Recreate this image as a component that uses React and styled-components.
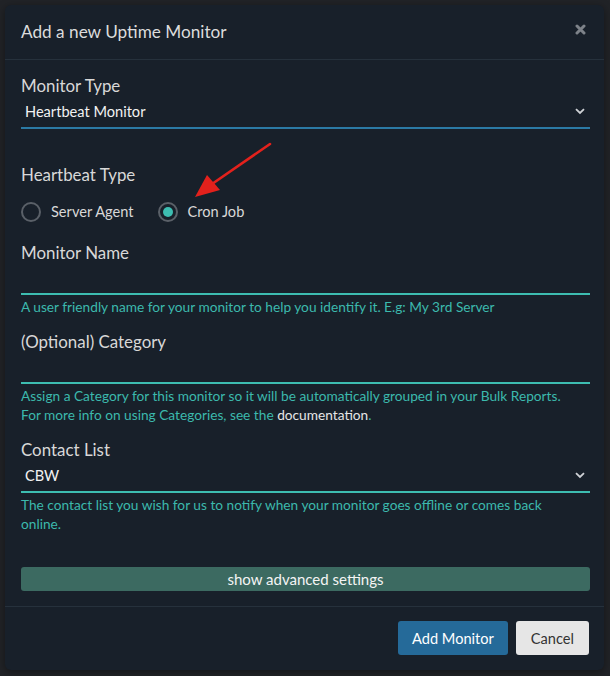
import React from "react";
import styled, { createGlobalStyle } from "styled-components";

const Global = createGlobalStyle`
  html, body { margin: 0; padding: 0; background: #212327; }
  body { font-family: Lato, "Open Sans", sans-serif; }
  * { box-sizing: border-box; }
`;

const Backdrop = styled.div`
  width: 610px;
  height: 676px;
  padding: 5px 6px 6px 5px;
  background: #212327;
`;

const Modal = styled.div`
  position: relative;
  width: 599px;
  height: 665px;
  background: #18202a;
  border-radius: 6px;
  display: flex;
  flex-direction: column;
  box-shadow: 0 2px 8px rgba(0, 0, 0, 0.4);
`;

const Header = styled.div`
  height: 55px;
  padding: 0 16px;
  display: flex;
  align-items: center;
  justify-content: space-between;
  border-bottom: 1px solid #26313c;
`;

const Title = styled.h4`
  margin: 0;
  font-size: 17.2px;
  font-weight: 400;
  color: #dcdcdc;
`;

const Close = styled.svg`
  margin-right: 2px;
  margin-top: -5px;
`;

const Body = styled.div`
  flex: 1;
  padding: 15px 14px 15px 16px;
  display: flex;
  flex-direction: column;
  border-bottom: 1px solid #26313c;
`;

const Group = styled.div`
  display: flex;
  flex-direction: column;
  margin-bottom: ${(p) => p.$mb || 0}px;
`;

const Label = styled.label`
  font-size: 16.9px;
  line-height: 22px;
  color: #d8d8d8;
`;

const SelectBox = styled.div`
  height: 32px;
  display: flex;
  align-items: center;
  justify-content: space-between;
  padding: 0 5px 0 4px;
  border-bottom: 2px solid ${(p) => p.$line};
  color: #f2f2f2;
  font-size: 14.6px;
`;

const InputBox = styled.div`
  height: 31px;
  border-bottom: 2px solid #3dbdb1;
`;

const Help = styled.p`
  margin: 2px 0 0;
  font-size: 13.7px;
  line-height: 19px;
  color: #3cb9ad;
`;

const DocLink = styled.span`
  color: #e6e6e6;
`;

const RadioRow = styled.div`
  display: flex;
  align-items: center;
  height: 24px;
  margin-top: 14px;
`;

const RadioItem = styled.div`
  display: flex;
  align-items: center;
  margin-right: ${(p) => p.$mr || 0}px;
`;

const RadioCircle = styled.span`
  width: 20px;
  height: 20px;
  border-radius: 50%;
  border: 2px solid #5a6068;
  display: flex;
  align-items: center;
  justify-content: center;
  margin-right: 10px;
  &::after {
    content: "";
    display: ${(p) => (p.$checked ? "block" : "none")};
    width: 10px;
    height: 10px;
    border-radius: 50%;
    background: #3dbdb1;
  }
`;

const RadioText = styled.span`
  font-size: 14.6px;
  color: #d8d8d8;
`;

const AdvancedButton = styled.div`
  height: 24px;
  margin-top: 34px;
  border-radius: 3px;
  background: #3c6a61;
  color: #f4f4f4;
  font-size: 15px;
  display: flex;
  align-items: center;
  justify-content: center;
`;

const Footer = styled.div`
  height: 64px;
  padding: 0 15px 0 16px;
  display: flex;
  align-items: center;
  justify-content: flex-end;
  gap: 8px;
`;

const Button = styled.div`
  height: 34px;
  padding: 0 ${(p) => p.$px}px;
  border-radius: 3px;
  display: flex;
  align-items: center;
  font-size: 14.6px;
  background: ${(p) => (p.$primary ? "#256a99" : "#e6e6e6")};
  color: ${(p) => (p.$primary ? "#ffffff" : "#333333")};
`;

const Arrow = styled.svg`
  position: absolute;
  left: 185px;
  top: 135px;
  pointer-events: none;
`;

const Chevron = () => (
  <svg width="10" height="7" viewBox="0 0 10 7">
    <path d="M1 1.2 L5 5 L9 1.2" fill="none" stroke="#cfd2d6" strokeWidth="1.8" />
  </svg>
);

export default function App() {
  return (
    <>
      <Global />
      <Backdrop>
        <Modal>
          <Header>
            <Title>Add a new Uptime Monitor</Title>
            <Close width="11" height="11" viewBox="0 0 11 11">
              <path d="M2 2 L9 9 M9 2 L2 9" stroke="#7d8289" strokeWidth="3" strokeLinecap="round" />
            </Close>
          </Header>
          <Body>
            <Group $mb={35}>
              <Label>Monitor Type</Label>
              <SelectBox $line="#2b7aa5">
                <span>Heartbeat Monitor</span>
                <Chevron />
              </SelectBox>
            </Group>
            <Group $mb={18}>
              <Label>Heartbeat Type</Label>
              <RadioRow>
                <RadioItem $mr={24}>
                  <RadioCircle />
                  <RadioText>Server Agent</RadioText>
                </RadioItem>
                <RadioItem>
                  <RadioCircle $checked />
                  <RadioText>Cron Job</RadioText>
                </RadioItem>
              </RadioRow>
            </Group>
            <Group $mb={15}>
              <Label>Monitor Name</Label>
              <InputBox />
              <Help>A user friendly name for your monitor to help you identify it. E.g: My 3rd Server</Help>
            </Group>
            <Group $mb={15}>
              <Label>(Optional) Category</Label>
              <InputBox />
              <Help>
                Assign a Category for this monitor so it will be automatically grouped in your Bulk Reports.
                <br />
                For more info on using Categories, see the <DocLink>documentation</DocLink>.
              </Help>
            </Group>
            <Group>
              <Label>Contact List</Label>
              <SelectBox $line="#3dbdb1">
                <span>CBW</span>
                <Chevron />
              </SelectBox>
              <Help>
                The contact list you wish for us to notify when your monitor goes offline or comes back
                <br />
                online.
              </Help>
            </Group>
            <AdvancedButton>show advanced settings</AdvancedButton>
          </Body>
          <Footer>
            <Button $primary $px={14}>Add Monitor</Button>
            <Button $px={15}>Cancel</Button>
          </Footer>
          <Arrow width="90" height="70" viewBox="0 0 90 70">
            <path d="M80 4 L22 44" stroke="#e3211c" strokeWidth="2.6" strokeLinecap="round" />
            <path d="M5 57 L17 35 L30 50 Z" fill="#e3211c" />
          </Arrow>
        </Modal>
      </Backdrop>
    </>
  );
}
